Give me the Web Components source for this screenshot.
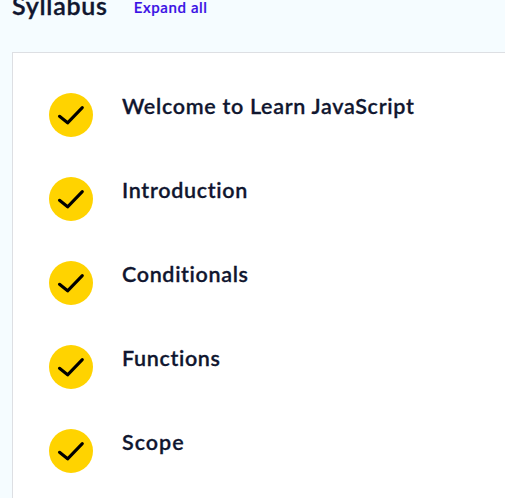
<!DOCTYPE html>
<html lang="en">
<head>
<meta charset="utf-8">
<title>Syllabus</title>
<style>
html,body{margin:0;height:100%;overflow:hidden}
body{background:#f5fcff;color:#10162f;font-family:Lato,"Liberation Sans",sans-serif}
</style>
</head>
<body>
<syllabus-page>
<syllabus-item style="letter-spacing:.7px">Welcome to Learn JavaScript</syllabus-item>
<syllabus-item style="letter-spacing:.7px">Introduction</syllabus-item>
<syllabus-item style="letter-spacing:.65px">Conditionals</syllabus-item>
<syllabus-item style="letter-spacing:.65px">Functions</syllabus-item>
<syllabus-item style="letter-spacing:1px">Scope</syllabus-item>
</syllabus-page>
<script>
class CheckBadge extends HTMLElement{
  constructor(){
    super();
    this.attachShadow({mode:'open'}).innerHTML=`<style>
:host{display:block;width:44px;height:44px;flex:none}
svg{display:block}
</style>
<svg width="44" height="44" viewBox="0 0 44 44"><circle cx="22" cy="22" r="22" fill="#ffd300"/><path d="M10.5 23.3 18.6 29.8 33.3 14.7" fill="none" stroke="#000" stroke-width="3.1" stroke-linecap="round" stroke-linejoin="round"/></svg>`;
  }
}
customElements.define('check-badge',CheckBadge);

class SyllabusItem extends HTMLElement{
  constructor(){
    super();
    this.attachShadow({mode:'open'}).innerHTML=`<style>
:host{display:flex;height:44px;gap:29px}
h3{margin:0;font-size:21.5px;line-height:26px;font-weight:600;white-space:nowrap;-webkit-text-stroke:.3px currentColor}
</style><check-badge></check-badge><h3><slot></slot></h3>`;
  }
}
customElements.define('syllabus-item',SyllabusItem);

class SyllabusPage extends HTMLElement{
  constructor(){
    super();
    this.attachShadow({mode:'open'}).innerHTML=`<style>
:host{display:block;padding-left:12px}
header{display:flex;align-items:flex-start;gap:26px;height:52px;white-space:nowrap}
h2{margin:-12px 0 0;font-size:25px;line-height:34px;font-weight:600;letter-spacing:.75px;-webkit-text-stroke:.35px currentColor}
button{all:unset;margin-top:-5px;color:#3a10e5;font-size:15px;line-height:24px;font-weight:600;letter-spacing:.6px;-webkit-text-stroke:.2px currentColor}
section{box-sizing:border-box;height:470px;margin-right:-20px;padding:40px 0 0 36px;border:1px solid #dddfe3;background:#fff;display:flex;flex-direction:column;gap:40px}
</style><header><h2>Syllabus</h2><button>Expand all</button></header><section><slot></slot></section>`;
  }
}
customElements.define('syllabus-page',SyllabusPage);
</script>
</body>
</html>
